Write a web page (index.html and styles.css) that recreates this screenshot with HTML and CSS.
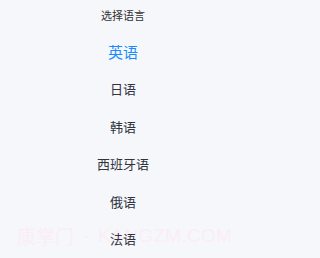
FILE: index.html
```html
<!DOCTYPE html>
<html lang="zh">
<head>
<meta charset="utf-8">
<link rel="stylesheet" href="styles.css">
</head>
<body>
<div class="page">
  <div class="watermark"><span class="wm-cn">康掌门</span><span class="wm-dot">·</span><span class="wm-en">KANGZM.COM</span></div>
  <div class="title">选择语言</div>
  <ul class="list">
    <li class="item active">英语</li>
    <li class="item">日语</li>
    <li class="item">韩语</li>
    <li class="item">西班牙语</li>
    <li class="item">俄语</li>
    <li class="item">法语</li>
  </ul>
</div>
</body>
</html>
```
FILE: styles.css
```css
html, body {
  margin: 0;
  padding: 0;
  background: #f6f7fb;
}
.page {
  position: relative;
  width: 246px;
  height: 258px;
  overflow: hidden;
  font-family: "Noto Sans CJK SC", "Noto Sans", sans-serif;
}
.title {
  position: relative;
  z-index: 1;
  height: 30px;
  line-height: 30px;
  text-align: center;
  font-size: 11px;
  color: #333;
}
.list {
  position: relative;
  z-index: 1;
  list-style: none;
  margin: 3px 0 0;
  padding: 0;
}
.item {
  height: 37.4px;
  line-height: 37.4px;
  text-align: center;
  font-size: 13px;
  color: #2f3440;
}
.item.active {
  font-size: 15px;
  color: #1a8cff;
}
.watermark {
  position: absolute;
  z-index: 0;
  left: 17px;
  top: 224px;
  display: flex;
  align-items: center;
  font-size: 19px;
  line-height: 24px;
  color: #fbedf6;
  white-space: nowrap;
  pointer-events: none;
}
.wm-cn {
  font-family: "Noto Sans CJK SC", sans-serif;
}
.wm-dot {
  font-family: "Liberation Sans", sans-serif;
  margin: 0 9px;
}
.wm-en {
  font-family: "Liberation Sans", sans-serif;
  letter-spacing: 0.3px;
}
```
